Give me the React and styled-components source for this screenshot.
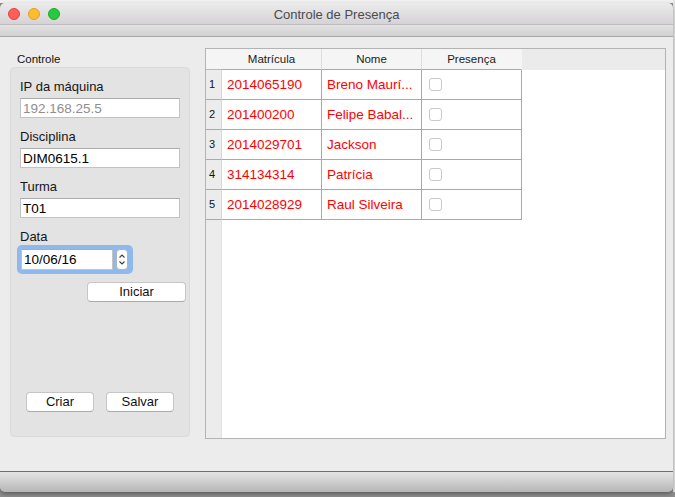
import React from "react";
import styled, { createGlobalStyle } from "styled-components";

const GlobalStyle = createGlobalStyle`
  html, body {
    margin: 0;
    padding: 0;
  }
  body {
    width: 675px;
    height: 497px;
    overflow: hidden;
    background: linear-gradient(#f1f1f1 0 3px, #8e8e8e 3px);
    font-family: "Liberation Sans", Arial, sans-serif;
  }
`;

const Page = styled.div`
  padding-top: 3px;
  width: 675px;
  background: linear-gradient(90deg, transparent 673px, #e4e4e4 673px);
`;

const Window = styled.div`
  width: 673px;
  height: 489px;
  display: flex;
  flex-direction: column;
  border-radius: 5px;
  overflow: hidden;
  box-shadow: 0 2px 4px rgba(0, 0, 0, 0.35);
`;

const TitleBar = styled.div`
  height: 21px;
  flex-shrink: 0;
  display: grid;
  grid-template-columns: 1fr auto 1fr;
  align-items: center;
  background: linear-gradient(#ecebec, #d5d3d5);
  border-bottom: 1px solid #bebcbe;
`;

const Lights = styled.div`
  display: flex;
  gap: 8px;
  padding: 1px 0 0 8px;
`;

const Light = styled.span`
  width: 12px;
  height: 12px;
  border-radius: 50%;
  box-sizing: border-box;
  background: ${(p) => p.$color};
  border: 0.5px solid ${(p) => p.$edge};
`;

const Title = styled.div`
  font-size: 13px;
  color: #4b4b4b;
  padding-top: 1px;
`;

const Band = styled.div`
  height: 11px;
  flex-shrink: 0;
  background: linear-gradient(#e2e2e2, #d1d1d1);
  border-bottom: 1px solid #a8a8a8;
`;

const Body = styled.div`
  flex: 1;
  background: #ececec;
  display: grid;
  grid-template-columns: 180px 461px;
  column-gap: 15px;
  align-items: start;
  padding: 11px 7px 0 10px;
`;

const Footer = styled.div`
  height: 20px;
  flex-shrink: 0;
  border-top: 1px solid #6e6e6e;
  background: linear-gradient(#e4e4e4, #b6b6b6);
`;

/* left side */
const Side = styled.div`
  display: flex;
  flex-direction: column;
`;

const GroupTitle = styled.div`
  font-size: 11.5px;
  line-height: 13px;
  height: 19px;
  box-sizing: border-box;
  padding: 5px 0 0 7px;
  color: #111;
`;

const GroupBox = styled.div`
  height: 370px;
  box-sizing: border-box;
  display: flex;
  flex-direction: column;
  background: #e3e3e3;
  border: 1px solid #dadada;
  border-radius: 4px;
  padding: 11px 9px 24px 9px;
`;

const FieldLabel = styled.div`
  font-size: 13px;
  line-height: 16px;
  color: #161616;
  margin-bottom: ${(p) => (p.$tight ? 0 : 3)}px;
`;

const TextInput = styled.input`
  box-sizing: border-box;
  width: ${(p) => p.$width || "100%"};
  height: ${(p) => p.$height || 20}px;
  margin: 0 0 ${(p) => p.$gap ?? 11}px 0;
  padding: 0 2px;
  border: 1px solid #c3c3c3;
  border-top-color: #acacac;
  background: #fff;
  font-family: "Liberation Sans", Arial, sans-serif;
  font-size: 13.5px;
  color: #000;
  outline: none;
  &::placeholder {
    color: #8e8e8e;
  }
`;

const FocusRing = styled.div`
  display: flex;
  gap: 3px;
  width: 116px;
  box-sizing: border-box;
  margin-left: -3px;
  padding: 4px 5px 4px 4px;
  background: #8fb8ec;
  border-radius: 5px;
`;

const Spinner = styled.div`
  width: 12px;
  height: 21px;
  box-sizing: border-box;
  background: #fff;
  border: 1px solid #b4b4b4;
  border-radius: 4px;
  display: flex;
  align-items: center;
  justify-content: center;
`;

const Button = styled.button`
  box-sizing: border-box;
  width: ${(p) => p.$width}px;
  height: 20px;
  padding: 0;
  background: #fff;
  border: 1px solid #c6c6c6;
  border-bottom-color: #aaaaaa;
  border-radius: 4px;
  font-family: "Liberation Sans", Arial, sans-serif;
  font-size: 13px;
  line-height: 18px;
  color: #111;
`;

const StartButton = styled(Button)`
  align-self: flex-end;
  margin: 8px -6px 0 0;
`;

const ButtonRow = styled.div`
  margin-top: auto;
  display: flex;
  justify-content: center;
  gap: 12px;
`;

/* table */
const TableFrame = styled.div`
  height: 391px;
  box-sizing: border-box;
  border: 1px solid #b3b3b3;
  display: flex;
  flex-direction: column;
  background: #fff;
`;

const HeaderRow = styled.div`
  display: flex;
  height: 21px;
  flex-shrink: 0;
  background: #ebebeb;
`;

const HeaderCorner = styled.div`
  width: 16px;
  box-sizing: border-box;
  background: #f5f5f5;
  border-bottom: 1px solid #b9b9b9;
`;

const HeaderCell = styled.div`
  width: 100px;
  box-sizing: border-box;
  background: #f5f5f5;
  border-bottom: 1px solid #a9a9a9;
  border-right: 1px solid ${(p) => (p.$last ? "#f5f5f5" : "#dedede")};
  text-align: center;
  font-size: 11.5px;
  line-height: 20px;
  color: #1a1a1a;
`;

const Rows = styled.div`
  flex: 1;
  background: linear-gradient(90deg, #ececec 0 15px, #e2e2e2 15px 16px, #fff 16px);
`;

const Row = styled.div`
  display: flex;
  height: 30px;
`;

const RowNum = styled.div`
  width: 16px;
  box-sizing: border-box;
  background: #ececec;
  border-right: 1px solid #d8d8d8;
  border-bottom: 1px solid #a9a9a9;
  padding-left: 3px;
  font-size: 11px;
  line-height: 29px;
  color: #111;
`;

const Cell = styled.div`
  width: 100px;
  box-sizing: border-box;
  border-right: 1px solid #a9a9a9;
  border-bottom: 1px solid #a9a9a9;
  padding-left: 5px;
  font-size: 13.5px;
  line-height: 29px;
  color: #ff0000;
  white-space: nowrap;
  overflow: hidden;
`;

const CheckCell = styled(Cell)`
  display: flex;
  align-items: center;
  padding-left: 7px;
`;

const Checkbox = styled.span`
  width: 13px;
  height: 13px;
  box-sizing: border-box;
  border: 1px solid #c9c9c9;
  border-radius: 3px;
  background: #fff;
  margin-top: -1px;
`;

const students = [
  { id: "2014065190", name: "Breno Maurí..." },
  { id: "201400200", name: "Felipe Babal..." },
  { id: "2014029701", name: "Jackson" },
  { id: "314134314", name: "Patrícia" },
  { id: "2014028929", name: "Raul Silveira" },
];

function Field({ label, value, placeholder }) {
  return (
    <>
      <FieldLabel>{label}</FieldLabel>
      <TextInput defaultValue={value} placeholder={placeholder} readOnly />
    </>
  );
}

export default function App() {
  return (
    <Page>
      <GlobalStyle />
      <Window>
        <TitleBar>
          <Lights>
            <Light $color="#fc5f57" $edge="#e0443e" />
            <Light $color="#fdbc2e" $edge="#dea123" />
            <Light $color="#28c840" $edge="#1aab29" />
          </Lights>
          <Title>Controle de Presença</Title>
          <div />
        </TitleBar>
        <Band />
        <Body>
          {/* painel de controle */}
          <Side>
            <GroupTitle>Controle</GroupTitle>
            <GroupBox>
              <Field label="IP da máquina" placeholder="192.168.25.5" />
              <Field label="Disciplina" value="DIM0615.1" />
              <Field label="Turma" value="T01" />
              <FieldLabel $tight>Data</FieldLabel>
              <FocusRing>
                <TextInput
                  defaultValue="10/06/16"
                  readOnly
                  $width="92px"
                  $height={21}
                  $gap={0}
                />
                <Spinner>
                  <svg width="10" height="19" viewBox="0 0 10 19">
                    <path
                      d="M2.5 7.5 L5 5 L7.5 7.5 M2.5 11.5 L5 14 L7.5 11.5"
                      fill="none"
                      stroke="#3c3c3c"
                      strokeWidth="1.1"
                    />
                  </svg>
                </Spinner>
              </FocusRing>
              <StartButton $width={99}>Iniciar</StartButton>
              <ButtonRow>
                <Button $width={68}>Criar</Button>
                <Button $width={68}>Salvar</Button>
              </ButtonRow>
            </GroupBox>
          </Side>

          {/* tabela de alunos */}
          <TableFrame>
            <HeaderRow>
              <HeaderCorner />
              <HeaderCell>Matrícula</HeaderCell>
              <HeaderCell>Nome</HeaderCell>
              <HeaderCell $last>Presença</HeaderCell>
            </HeaderRow>
            <Rows>
              {students.map((s, i) => (
                <Row key={s.id}>
                  <RowNum>{i + 1}</RowNum>
                  <Cell>{s.id}</Cell>
                  <Cell>{s.name}</Cell>
                  <CheckCell>
                    <Checkbox />
                  </CheckCell>
                </Row>
              ))}
            </Rows>
          </TableFrame>
        </Body>
        <Footer />
      </Window>
    </Page>
  );
}
